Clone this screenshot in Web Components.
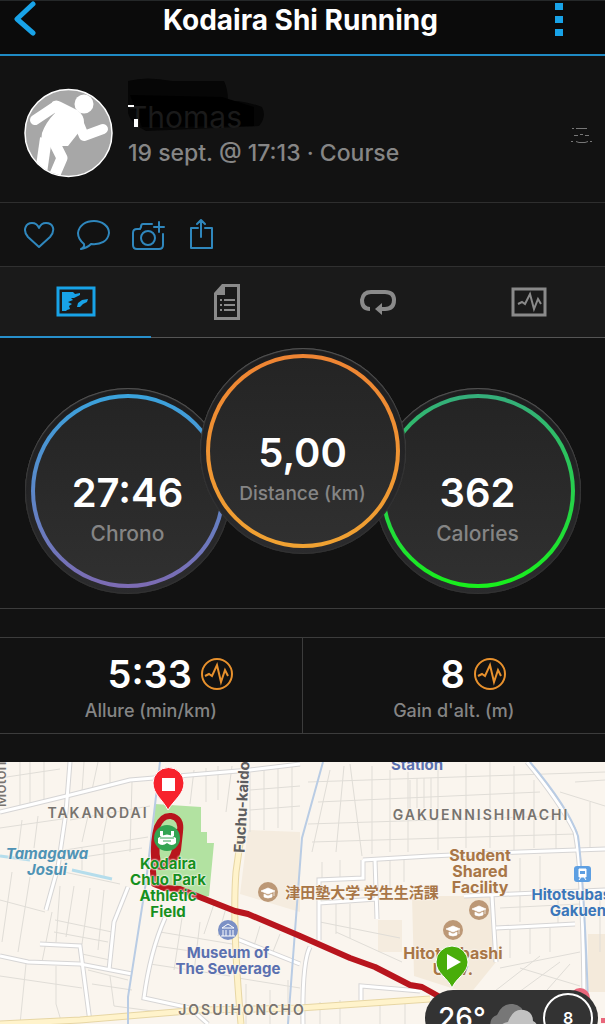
<!DOCTYPE html>
<html lang="fr">
<head>
<meta charset="utf-8">
<meta name="viewport" content="width=device-width, initial-scale=1">
<title>Kodaira Shi Running</title>
<style>
  html,body{ height:100%; }
  body{
    margin:0; display:flex; flex-direction:column; overflow:hidden;
    background:#121212; color:#fff;
    font-family:Inter,"Noto Sans CJK JP",sans-serif;
  }
</style>
</head>
<body>

<activity-header heading="Kodaira Shi Running"></activity-header>

<activity-profile>
  <span slot="name">Thomas</span>
  <span slot="details">19 sept. @ 17:13 · Course</span>
</activity-profile>

<social-actions></social-actions>
<activity-tabs></activity-tabs>

<metric-rings>
  <metric-ring value="27:46" label="Chrono" style="--from:#3aa3dd;--to:#7d6bb3"></metric-ring>
  <metric-ring value="5,00" label="Distance (km)" main style="--from:#ee8433;--to:#f0a232"></metric-ring>
  <metric-ring value="362" label="Calories" style="--from:#35ae7c;--to:#18f01c"></metric-ring>
</metric-rings>

<stat-row>
  <stat-cell value="5:33" label="Allure (min/km)"></stat-cell>
  <stat-cell value="8" label="Gain d'alt. (m)"></stat-cell>
</stat-row>

<route-map>
  <map-label x="98" y="51" kind="area">TAKANODAI</map-label>
  <map-label x="481" y="53" kind="area">GAKUENNISHIMACHI</map-label>
  <map-label x="242" y="248" kind="area">JOSUIHONCHO</map-label>
  <map-label x="47" y="100" kind="water">Tamagawa<br>Josui</map-label>
  <map-label x="242" y="45" kind="road">Fuchu-kaido</map-label>
  <map-label x="1" y="18" kind="street">Motoha</map-label>
  <map-label x="168" y="126" kind="park">Kodaira<br>Chuo Park<br>Athletic<br>Field</map-label>
  <map-label x="228" y="199" kind="museum">Museum of<br>The Sewerage</map-label>
  <map-label x="417" y="3" kind="museum">Station</map-label>
  <map-label x="362" y="131" kind="school">津田塾大学 学生生活課</map-label>
  <map-label x="480" y="109" kind="campus">Student<br>Shared<br>Facility</map-label>
  <map-label x="453" y="199" kind="campus">Hitotsubashi<br>Univ.</map-label>
  <map-label x="578" y="141" kind="station">Hitotsubashi<br>Gakuen</map-label>
  <weather-pill slot="weather" temp="26°" wind="8"></weather-pill>
</route-map>

<script>
/* small helper: every element below renders once into its own shadow root */
class BaseElement extends HTMLElement {
  constructor(){
    super();
    this.attachShadow({mode:'open'});
  }
  connectedCallback(){ this.shadowRoot.innerHTML=this.render(); }
  attr(name){ return this.getAttribute(name)||''; }
}

const PULSE='<path d="M0 6 L4 4 L7 6 L12 -5 L16 12 L20 0 L23 6"/>';

class ActivityHeader extends BaseElement {
  render(){
    return `
      <style>
        :host{ display:block; flex:none; background:#0b0b0b; border-bottom:2px solid #1f8ac4; }
        header{ display:flex; justify-content:space-between; height:54px; padding:0 16px 0 12px; box-sizing:border-box; border-top:1px solid #252829; }
        h1{ margin:0; padding-top:2px; font-size:28px; line-height:34px; font-weight:700; }
        button{ width:60px; height:38px; padding:0; border:0; background:none; color:#18a3e8; text-align:left; }
        button.more{ text-align:center; }
        svg{ display:block; }
        .more svg{ margin:0 auto; }
      </style>
      <header>
        <button aria-label="Retour"><svg width="28" height="38" fill="none" stroke="currentColor" stroke-width="5" stroke-linecap="round" stroke-linejoin="round"><path d="M21 3 L5 18 L21 32"/></svg></button>
        <h1>${this.attr('heading')}</h1>
        <button class="more" aria-label="Plus"><svg width="8" height="38" fill="currentColor"><path d="M0 2h8v7H0zM0 15h8v7H0zM0 28h8v7H0z"/></svg></button>
      </header>
    `;
  }
}
customElements.define('activity-header',ActivityHeader);

class ActivityProfile extends BaseElement {
  render(){
    return `
      <style>
        :host{ display:flex; flex:none; align-items:center; gap:15px; height:146px; padding:0 13px 0 24px; border-bottom:1px solid #2e2e2e; }
        .avatar{ display:block; flex:none; margin-top:8px; }
        .who{ flex:1; padding-top:12px; }
        .name{ position:relative; font-size:30px; line-height:36px; font-weight:400; color:#1a1a1a; }
        .name svg{ position:absolute; left:-2px; top:-22px; }
        .name span{ position:relative; }
        .details{ font-size:23px; line-height:36px; font-weight:500; color:#868686; }
        .sketch{ flex:none; margin-top:12px; }
      </style>
      <svg class="avatar" width="89" height="90" viewBox="0 0 89 90">
        <defs><clipPath id="c"><circle cx="44.500" cy="45" r="43"/></clipPath></defs>
        <circle cx="44.500" cy="45" r="43.500" fill="#a7a7a7" stroke="#fff" stroke-width="1.500"/>
        <g clip-path="url(#c)" fill="#fff">
          <circle cx="60" cy="16" r="9.500"/>
          <path d="M11 32 L32 18" stroke="#fff" stroke-width="10" stroke-linecap="round"/>
          <path d="M28 14 Q32 11 37 14 L53 22 Q60 27 60 34 L59 39 L44 58 L23 58 Q16 53 18 45 Q22 34 31 25 Z"/>
          <path d="M55 36 L60 48 L79 41" fill="none" stroke="#fff" stroke-width="10" stroke-linecap="round" stroke-linejoin="round"/>
          <path d="M22 50 L17 85" stroke="#fff" stroke-width="12"/>
          <path d="M30 54 L38 70 L29 91" fill="none" stroke="#fff" stroke-width="11" stroke-linejoin="round"/>
        </g>
      </svg>
      <div class="who">
        <div class="name">
          <svg width="144" height="56" viewBox="0 0 144 56" aria-hidden="true">
            <path d="M2 4 Q20 -1 46 4 L98 4 Q102 12 102 24 L112 24 Q126 26 136 30 Q141 40 133 49 L20 54 Q4 46 2 36 Z" fill="#060606"/>
            <path d="M4 18 L96 20 L128 30 L128 49 L16 50 Z" fill="#000"/>
          </svg>
          <span><slot name="name"></slot></span>
          <svg width="144" height="56" viewBox="0 0 144 56" aria-hidden="true"><path d="M2 28h6v2H2zM8 42h4v8H8z" fill="#fff"/></svg>
        </div>
        <div class="details"><slot name="details"></slot></div>
      </div>
      <svg class="sketch" width="22" height="18" stroke="#777" stroke-width="1"><path d="M2 2.500h2M6 2.500h11M4 9.500h4M10 8.500h3M15 9.500h4M1 15.500h2M6 15.500l3 1h6l3-1M20 15.500h2" fill="none"/></svg>
    `;
  }
}
customElements.define('activity-profile',ActivityProfile);

class SocialActions extends BaseElement {
  render(){
    return `
      <style>
        :host{ display:flex; flex:none; gap:22px; align-items:center; height:63px; padding:0 22px; border-bottom:1px solid #303030; }
        button{ padding:0; border:0; background:none; color:#2f87bd; }
        svg{ display:block; fill:none; stroke:currentColor; stroke-width:2; stroke-linejoin:round; stroke-linecap:round; }
      </style>
      <button aria-label="J'aime"><svg width="33" height="36"><path d="M17 30 L6 20 C0 13 4 6 10 6 Q15 6 17 11 Q19 6 24 6 C31 6 34 13 28 20 Z"/></svg></button>
      <button aria-label="Commenter"><svg width="33" height="36"><path d="M7 27 Q1 22 1 16 C2 8 9 4 17 4 C25 4 32 9 32 16 C31 24 24 28 14 27 Q10 31 4 32 Q8 30 7 27 Z"/></svg></button>
      <button aria-label="Ajouter une photo"><svg width="34" height="36"><path d="M20 7 H11 Q9 7 9 10 L8 12 H5 Q1 12 1 16 V28 Q1 32 5 32 H27 Q31 32 31 28 V17 M27 5 V15 M22 10 H32"/><circle cx="16" cy="21" r="7"/></svg></button>
      <button aria-label="Partager"><svg width="26" height="36"><path d="M10 11 H3 V31 H24 V11 H17 M13 20 V3 M9 7 L13 3 L17 7"/></svg></button>
    `;
  }
}
customElements.define('social-actions',SocialActions);

class ActivityTabs extends BaseElement {
  render(){
    return `
      <style>
        :host{ display:block; flex:none; background:#1a1a1a; }
        nav{ display:grid; grid-template-columns:repeat(4,1fr); height:71px; }
        button{ display:grid; place-items:center; padding:0; border:0; border-bottom:1px solid #555; background:none; color:#8a8a8a; }
        button[aria-selected=true]{ border-bottom:2px solid #278fcb; color:#18a3e8; }
        svg{ display:block; }
      </style>
      <nav role="tablist">
        <button role="tab" aria-selected="true" aria-label="Carte"><svg width="40" height="32" fill="currentColor"><path d="M2 2 H38 V29 H2 Z" fill="none" stroke="currentColor" stroke-width="3"/><path d="M6 6 H17 L19 8 L24 7 V9 L18 12 H15 L17 14 L12 16 L16 18 L13 20 L14 23 L11 24 L10 25 H6 Z"/><path d="M22 17 L26 14 L32 13 L31 16 L27 18 L24 21 H21 Z"/></svg></button>
        <button role="tab" aria-selected="false" aria-label="Statistiques"><svg width="28" height="38" fill="currentColor"><path fill-rule="evenodd" d="M9 1 H27 V37 H1 V10 Z M12 4 V12 H4 V34 H24 V4 Z"/><path d="M7 16h2v2H7zM11 16h11v2H11zM7 21h2v2H7zM11 21h11v2H11zM7 26h2v2H7zM11 26h11v2H11z"/></svg></button>
        <button role="tab" aria-selected="false" aria-label="Circuits"><svg width="38" height="26" fill="none" stroke="currentColor" stroke-width="4"><path d="M11 20 C5 20 3 16 3 11 Q4 3 12 3 H26 Q35 3 35 11 Q35 20 26 20 H22"/><path d="M16 20 L23 14 V26 Z" fill="currentColor" stroke="none"/></svg></button>
        <button role="tab" aria-selected="false" aria-label="Graphiques"><svg width="36" height="30" fill="none" stroke="currentColor"><path d="M2 2 H34 V28 H2 Z" stroke-width="3"/><g transform="translate(7 11)" stroke-width="2"><path d="M0 6 L4 4 L7 6 L12 -4 L16 11 L20 1 L23 6"/></g></svg></button>
      </nav>
    `;
  }
}
customElements.define('activity-tabs',ActivityTabs);

class MetricRings extends BaseElement {
  render(){
    return `
      <style>
        :host{ display:flex; flex:none; justify-content:center; align-items:flex-end; height:271px; padding-bottom:14px; box-sizing:border-box; border-bottom:1px solid #3c3c3c; }
        ::slotted(:not(:first-child)){ margin-left:-31px; }
        ::slotted([main]){ position:relative; z-index:1; margin-bottom:40px; }
      </style>
      <slot></slot>
    `;
  }
}
customElements.define('metric-rings',MetricRings);

class MetricRing extends BaseElement {
  render(){
    return `
      <style>
        :host{
          display:block; flex:none; width:206px; height:206px; padding:6px; box-sizing:border-box; border-radius:50%;
          background:linear-gradient(#1d1d1e,#2b2b2d);
          box-shadow:inset 0 1px 1px #555, inset 0 0 1px 1px #333;
        }
        .ring{
          display:flex; flex-direction:column; align-items:center; height:100%; padding-top:75px; box-sizing:border-box;
          border:4px solid transparent; border-radius:50%;
          background:linear-gradient(#242424,#303030) padding-box, linear-gradient(var(--from),var(--to)) border-box;
        }
        strong{ font-size:40px; line-height:40px; font-weight:600; }
        span{ padding-top:9px; font-size:21px; line-height:24px; font-weight:500; color:#858585; }
        :host([main]) span{ font-size:19px; }
      </style>
      <div class="ring"><strong>${this.attr('value')}</strong><span>${this.attr('label')}</span></div>
    `;
  }
}
customElements.define('metric-ring',MetricRing);

class StatRow extends BaseElement {
  render(){
    return `
      <style>
        :host{ display:grid; grid-template-columns:1fr 1fr; flex:none; height:95px; margin:28px 0; border-top:1px solid #3c3c3c; border-bottom:1px solid #3c3c3c; }
        ::slotted(:not(:last-child)){ border-right:1px solid #3c3c3c; }
      </style>
      <slot></slot>
    `;
  }
}
customElements.define('stat-row',StatRow);

class StatCell extends BaseElement {
  render(){
    return `
      <style>
        :host{ display:flex; flex-direction:column; align-items:center; padding-top:16px; }
        .value{ display:flex; align-items:center; gap:8px; padding-left:40px; font-size:38px; line-height:40px; font-weight:600; }
        .label{ padding-top:5px; font-size:18px; line-height:24px; font-weight:500; color:#858585; }
        svg{ display:block; fill:none; stroke:#e8912d; stroke-width:2; }
      </style>
      <div class="value">${this.attr('value')}<svg width="34" height="34"><circle cx="17" cy="17" r="15"/><g transform="translate(5 13)">${PULSE}</g></svg></div>
      <div class="label">${this.attr('label')}</div>
    `;
  }
}
customElements.define('stat-cell',StatCell);

/* place name on the map, centred on its x / y point */
class MapLabel extends BaseElement {
  connectedCallback(){
    super.connectedCallback();
    this.style.left=this.attr('x')+'px';
    this.style.top=this.attr('y')+'px';
  }
  render(){
    return `
      <style>
        :host{
          position:absolute; transform:translate(-50%,-50%); white-space:nowrap; text-align:center;
          font-size:15px; line-height:16px; font-weight:700; color:#a87647;
          text-shadow:0 0 2px #faf5ee,0 0 2px #faf5ee,0 0 2px #faf5ee;
        }
        :host([kind=area]){ font-size:14px; font-weight:600; letter-spacing:2px; color:#77736f; }
        :host([kind=campus]){ font-size:16px; }
        :host([kind=water]){ font-style:italic; color:#4f93b5; }
        :host([kind=park]){ color:#16901e; }
        :host([kind=museum]){ color:#5a70b0; }
        :host([kind=station]){ color:#3b77ba; }
        :host([kind=road]){ writing-mode:vertical-rl; transform:translate(-50%,-50%) rotate(183deg); color:#5e5e60; }
        :host([kind=street]){ writing-mode:vertical-rl; transform:translate(-50%,-50%) rotate(180deg); font-weight:500; color:#77736f; }
      </style>
      <slot></slot>
    `;
  }
}
customElements.define('map-label',MapLabel);

class WeatherPill extends BaseElement {
  render(){
    return `
      <style>
        :host{
          position:absolute; right:7px; top:228px; z-index:2; display:flex; align-items:center; gap:4px; box-sizing:border-box;
          width:173px; height:56px; padding:0 5px 0 13px; border-radius:28px; background:#333;
          font-size:28px; font-weight:500;
        }
        svg{ display:block; flex:none; }
        .wind{ display:grid; place-items:center; flex:none; width:46px; height:46px; margin-left:auto; border:2px solid #fff; border-radius:50%; font-size:16px; font-weight:600; }
      </style>
      <span>${this.attr('temp')}</span>
      <svg width="48" height="36"><path d="M1 30 Q-2 18 7 15 Q12 3 23 4 Q33 5 34 16 V34 H5 Z" fill="#777"/><path d="M10 36 Q6 24 18 22 Q23 8 34 10 Q43 12 43 21 Q50 24 47 36 Z" fill="#c2c2c2"/></svg>
      <span class="wind">${this.attr('wind')}</span>
    `;
  }
}
customElements.define('weather-pill',WeatherPill);

class RouteMap extends BaseElement {
  render(){
    const cap='<path d="M-7 -1 L0 -4 L7 -1 L0 2 Z M-4 2 V5 Q0 7 4 5 V2 L0 4 Z M6 0 V4" fill="#fff" stroke="#fff" stroke-width=".7"/>';
    return `
      <style>
        :host{ position:relative; display:block; flex:1 0 0; min-height:0; overflow:hidden; background:#faf5ee; }
        svg{ position:absolute; left:0; top:0; }
        .pins{ z-index:1; }
        .minor{ stroke:#e0ddd7; stroke-width:1; }
        .casing{ stroke:#d6d5d5; stroke-width:5; }
        .street{ stroke:#fff; stroke-width:3; }
        .major{ stroke:#e7d6a4; stroke-width:7; }
        .major-fill{ stroke:#fff3cb; stroke-width:5; }
        .rail{ stroke:#b9cce4; stroke-width:2; }
        .run{ stroke:#b8151d; stroke-width:6; stroke-linejoin:round; stroke-linecap:round; }
      </style>
      <svg width="605" height="262" fill="none">
        <defs>
          <g id="streets">
            <path d="M0 50 Q60 36 130 18 L250 8 L300 2"/>
            <path d="M70 0 L66 50 L58 105 L46 148"/>
            <path d="M128 125 L114 160 L109 208"/>
            <path d="M0 194 L28 200 L80 202 L132 212"/>
            <path d="M40 182 L80 184 L90 260"/>
            <path d="M165 156 Q150 190 144 236 L190 246 L208 262"/>
            <path d="M232 175 L300 202"/>
            <path d="M527 0 Q560 40 575 70 Q583 110 584 240"/>
            <path d="M363 98 L430 94 L520 90 L605 87"/>
            <path d="M363 98 V116 L319 118 V178 M375 98 L377 157 M319 141 L377 137"/>
            <path d="M464 134 L605 128 M492 134 L496 200 M496 166 L575 162"/>
            <path d="M361 238 V224 L420 229"/>
            <path d="M310 185 Q302 200 303 262"/>
          </g>
          <g id="plots">
            <path d="M0 16 L60 7 M20 0 V46 M30 0 V44 M44 0 V38 M84 0 L82 30 M98 0 L92 28 M110 0 V26 M132 20 L130 90 M0 66 L62 57 M22 58 L18 90 M38 54 L34 86 M70 58 L150 44 M88 54 L82 80 M108 50 L102 80"/>
            <path d="M64 110 L120 122 M65 88 L148 75 M64 98 L142 86 M82 86 V108 M104 82 V114 M0 138 L45 150 M12 110 L2 180 M30 115 L18 190 M52 150 L42 200 M60 124 L56 180 M74 124 L66 175 M90 126 L82 182 M104 128 L98 188"/>
            <path d="M55 158 L112 170 M54 170 L108 180 M82 192 L110 198 M0 214 L82 226 M26 202 L20 262 M56 204 V242 L62 262 M92 222 L132 228 M110 214 L114 244 L160 250 M88 208 L128 218"/>
            <path d="M194 8 L190 42 M206 6 V40 M218 4 V38 M232 4 L226 50 M250 8 V70 M264 4 V68 M278 2 V66 M292 2 V68 M250 28 L300 24 M250 48 L300 44"/>
            <path d="M214 142 L204 172 M226 146 L218 174 M160 170 L232 182 M156 184 L226 194 M150 202 L230 214 M182 156 L174 208 M200 160 L194 210 M238 216 L300 226 M246 222 V262 M270 228 V262 M288 218 V262 M260 164 L254 184 M280 172 L272 192"/>
            <path d="M308 20 L605 10 M318 40 L540 30 M308 62 L560 54 M312 80 L575 72 M330 8 L312 90 M344 4 L336 90 M350 2 L362 94 M372 4 V92 M390 8 V90 M408 10 V90 M438 4 V88 M466 2 V86 M490 0 V86 M514 4 V88 M534 18 V86 M556 50 V88 M410 18V46 M417 16V46 M424 16V46 M431 16V46"/>
            <path d="M322 100 V116 M340 98 V116 M390 98 V128 M404 98 V120 M325 128 H375 M336 142 V172 M350 142 V176 M320 160 L400 176 M336 170 L402 200 M500 146 L580 142 M520 96 V160 M540 94 V128 M558 132 V164 M510 168 V196 M530 166 V192 M550 166 V190"/>
            <path d="M500 206 L580 190 M486 236 L540 194 M500 244 L560 200 M520 206 L580 224 M540 236 L570 202 M600 130 V190 M590 40 V88 M575 20 L605 18 M560 30 L605 44 M320 240 V262 M340 238 V262 M380 240 V262 M405 238 V262"/>
          </g>
          <path id="avenues" d="M243 60 L236 110 Q232 160 241 262 M0 262 L80 258 L200 248 L300 246 L430 237"/>
        </defs>
        <path d="M248 68 L300 70 V150 L240 132 Z M378 158 H402 V190 H378 Z" fill="#f5ecdf"/>
        <path d="M412 134 H492 L496 200 L470 232 L414 214 Z M588 172 H605 V230 H588 Z" fill="#f4eadb"/>
        <use href="#plots" class="minor"/>
        <path d="M155 42 L201 45 V70 H207 V81 H214 L209 134 L196 138 L150 120 Z" fill="#b2e2a1"/>
        <path d="M0 94 L30 98 M72 108 L112 117" stroke="#b5ddec" stroke-width="3"/>
        <use href="#streets" class="casing"/>
        <use href="#streets" class="street"/>
        <use href="#avenues" class="major"/>
        <use href="#avenues" class="major-fill"/>
        <path class="rail" d="M160 0 L146 120 L128 235 V262 M323 0 L302 76 L288 262 M530 0 Q568 45 578 74 Q584 120 588 240"/>
        <path class="run" d="M153 109 L154 122 L164 126 L180 127 L202 136 L235 149 L248 152 L300 174 L350 196 L375 205 L410 223 L422 225 L440 235"/>
        <path class="run" d="M154 100 Q153 78 157 65 Q162 53 171 54 Q182 56 180 70 L178 88 Q176 100 164 105 Q154 106 154 94 Z"/>
        <path class="run" d="M158 101 Q154 84 160 68 M177 70 Q176 99 165 101"/>
        <g>
          <circle cx="167" cy="76" r="13" fill="#33a452"/>
          <path d="M158 76 Q167 69 176 76 V81 Q172 85 167 81 Q162 85 158 81 Z M160 69h3v5h-3zM171 69h3v5h-3z" fill="#fff"/><path d="M160 76h14M163 79h8" stroke="#33a452"/>
          <circle cx="228" cy="168" r="10" fill="#7b90c5"/>
          <path d="M222 166 L228 162 L234 166 Z M223 168v6M226 168v6M230 168v6M233 168v6M221 174h14" stroke="#fff" stroke-width="1"/>
          <g fill="#bc9876"><circle cx="268" cy="130" r="10"/><circle cx="479" cy="148" r="10"/><circle cx="453" cy="168" r="10"/></g>
          <g transform="translate(268 130)">${cap}</g><g transform="translate(479 148)">${cap}</g><g transform="translate(453 168)">${cap}</g>
          <rect x="574" y="104" width="17" height="16" rx="3" fill="#5d9fe2"/>
          <path d="M579 107h7v8h-7zM579 118l2-3M586 118l-2-3" fill="#fff" stroke="#fff"/><path d="M580 109h5v3h-5z" fill="#5d9fe2"/>
          <circle cx="580" cy="236" r="10" fill="#e9667b"/>
          <path d="M601 256h4v5h-4z" fill="#e9667b"/>
        </g>
      </svg>
      <slot></slot>
      <svg class="pins" width="605" height="262">
        <path d="M168 48 C163 38 153 32 153 21 A15 15 0 0 1 184 21 C184 32 174 38 168 48 Z" fill="#f7222c" stroke="#fff"/>
        <path d="M162 16h13v13h-13z" fill="#fff"/>
        <path d="M452 226 C448 216 436 211 436 200 A16 16 0 0 1 468 200 C468 211 456 216 452 226 Z" fill="#49ad0a" stroke="#fff"/>
        <path d="M447 192 L461 200 L447 208 Z" fill="#fff"/>
      </svg>
      <slot name="weather"></slot>
    `;
  }
}
customElements.define('route-map',RouteMap);
</script>
</body>
</html>
